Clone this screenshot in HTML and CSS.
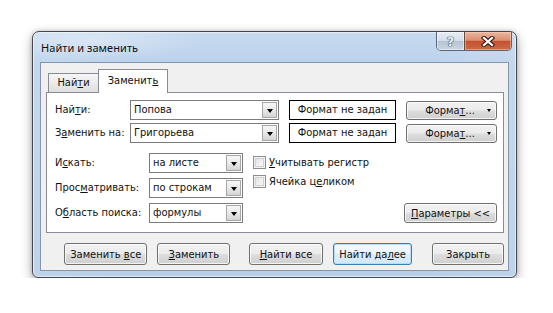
FILE: index.html
```html
<!DOCTYPE html>
<html lang="ru">
<head>
<meta charset="utf-8">
<title>Найти и заменить</title>
<link rel="stylesheet" href="styles.css">
</head>
<body>
<div class="stage">
  <div class="window">
    <div class="titlebar">
      <span class="title">Найти и заменить</span>
      <div class="caption">
        <span class="cbtn help">?</span>
        <span class="cbtn close">
          <svg width="14" height="11" viewBox="0 0 14 11">
            <path d="M3 2 L11 9 M11 2 L3 9" stroke="#3a2218" stroke-width="4.4" stroke-linecap="square" fill="none"/>
            <path d="M3 2 L11 9 M11 2 L3 9" stroke="#ffffff" stroke-width="2.2" stroke-linecap="square" fill="none"/>
          </svg>
        </span>
      </div>
    </div>
    <div class="client">
      <div class="tabs">
        <div class="tab tab-find"><span>Най<u>т</u>и</span></div>
        <div class="tab tab-replace active"><span>Заменит<u>ь</u></span></div>
      </div>
      <div class="panel">
        <div class="top-grid">
          <span class="lbl">Най<u>т</u>и:</span>
          <div class="combo"><span class="val">Попова</span><span class="dd"><i class="tri"></i></span></div>
          <div class="fmt">Формат не задан</div>
          <div class="btn fbtn"><span class="ftxt">Форма<u>т</u>...</span><i class="arr"></i></div>

          <span class="lbl">З<u>а</u>менить на:</span>
          <div class="combo"><span class="val">Григорьева</span><span class="dd"><i class="tri"></i></span></div>
          <div class="fmt">Формат не задан</div>
          <div class="btn fbtn"><span class="ftxt">Форма<u>т</u>...</span><i class="arr"></i></div>
        </div>
        <div class="lower">
          <div class="opt-grid">
            <span class="lbl">И<u>с</u>кать:</span>
            <div class="combo"><span class="val">на листе</span><span class="dd"><i class="tri"></i></span></div>
            <span class="lbl">Прос<u>м</u>атривать:</span>
            <div class="combo"><span class="val">по строкам</span><span class="dd"><i class="tri"></i></span></div>
            <span class="lbl">О<u>б</u>ласть поиска:</span>
            <div class="combo"><span class="val">формулы</span><span class="dd"><i class="tri"></i></span></div>
          </div>
          <div class="right-col">
            <div class="chk"><span class="box"></span><span><u>У</u>читывать регистр</span></div>
            <div class="chk"><span class="box"></span><span>Ячейка ц<u>е</u>ликом</span></div>
            <div class="btn params"><span><u>П</u>араметры &lt;&lt;</span></div>
          </div>
        </div>
      </div>
      <div class="actions">
        <div class="btn a1"><span>Заменить <u>в</u>се</span></div>
        <div class="btn a2"><span><u>З</u>аменить</span></div>
        <div class="btn a3"><span><u>Н</u>айти все</span></div>
        <div class="btn a4 default"><span>Найти да<u>л</u>ее</span></div>
        <div class="btn a5"><span>Закрыть</span></div>
      </div>
    </div>
  </div>
</div>
</body>
</html>
```
FILE: styles.css
```css
html, body {
  margin: 0;
  background: #ffffff;
}
body {
  font-family: "DejaVu Sans Condensed", "Liberation Sans", sans-serif;
  font-size: 11px;
  color: #111;
}
u { text-decoration: underline; text-underline-offset: 1px; }

.stage {
  padding: 31px 0 0 32px;
}

.window {
  box-sizing: border-box;
  width: 485px;
  height: 247px;
  border: 1px solid #43474e;
  border-radius: 7px 7px 6px 6px;
  background:
    radial-gradient(ellipse 160px 30px at 60px 8px, rgba(255,255,255,0.35), rgba(255,255,255,0) 70%),
    linear-gradient(90deg, rgba(255,255,255,0.12) 0%, rgba(255,255,255,0) 20%, rgba(255,255,255,0) 80%, rgba(255,255,255,0.12) 100%),
    linear-gradient(180deg, #c6d9ef 0px, #bcd2eb 30px, #b6cee8 100%);
  box-shadow: 0 4px 12px rgba(0,0,0,0.32), 0 0 4px rgba(0,0,0,0.18), inset 0 0 0 1px rgba(255,255,255,0.55);
  display: flex;
  flex-direction: column;
}

.titlebar {
  height: 30px;
  display: flex;
  justify-content: space-between;
  align-items: flex-start;
  padding-left: 8px;
}
.title {
  font-family: "Noto Sans", "Open Sans", sans-serif;
  font-size: 11px;
  letter-spacing: 0.05px;
  line-height: 16px;
  margin-top: 8px;
  color: #101010;
}
.caption {
  display: flex;
  margin-right: 4px;
  height: 18px;
  border: 1px solid #59667a;
  border-top: none;
  border-radius: 0 0 5px 5px;
  overflow: hidden;
}
.cbtn {
  display: flex;
  align-items: center;
  justify-content: center;
  height: 18px;
}
.help {
  width: 27px;
  background: linear-gradient(180deg, #e6eef7 0%, #d3dfec 48%, #b4c2d2 50%, #c8d6e6 100%);
  font-family: "DejaVu Sans", sans-serif;
  font-weight: bold;
  font-size: 13px;
  color: #eef1f4;
  text-shadow: 0 0 1px #3c4654, 0 0 1px #3c4654, 0 0 1px #3c4654;
  box-shadow: inset 0 0 0 1px rgba(255,255,255,0.5);
}
.close {
  width: 46px;
  border-left: 1px solid #6b4a3c;
  background: linear-gradient(180deg, #eab7a0 0%, #dc8e70 46%, #c4522f 52%, #cc6a45 100%);
  box-shadow: inset 0 0 0 1px rgba(255,220,200,0.45);
}

.client {
  flex: 1;
  margin: 0 7px 6px 7px;
  border: 1px solid #8596ab;
  background: #f0f0f0;
  padding: 6px 4px 0 5px;
  display: flex;
  flex-direction: column;
}

.tabs {
  display: flex;
  align-items: flex-end;
  padding-left: 2px;
  height: 23px;
}
.tab {
  box-sizing: border-box;
  border: 1px solid #898c95;
  border-bottom: none;
  text-align: center;
}
.tab-find {
  width: 51px;
  height: 19px;
  line-height: 18px;
  background: linear-gradient(180deg, #f6f6f6 0%, #ebebeb 50%, #dedede 100%);
}
.tab.active {
  position: relative;
  z-index: 1;
  width: 70px;
  height: 24px;
  margin-left: -1px;
  margin-bottom: -1px;
  line-height: 21px;
  background: #ffffff;
}

.panel {
  border: 1px solid #898c95;
  background: #ffffff;
  padding: 7px 6px 9px 8px;
}

.top-grid {
  display: grid;
  grid-template-columns: 65px 149px 107px 91px;
  grid-auto-rows: 20px;
  column-gap: 10px;
  row-gap: 3px;
  align-items: center;
}
.lbl {
  white-space: nowrap;
  line-height: 20px;
}

.combo {
  box-sizing: border-box;
  height: 20px;
  display: flex;
  align-items: stretch;
  border: 1px solid #7c7c7c;
  background: #fff;
}
.combo .val {
  flex: 1;
  padding-left: 3px;
  line-height: 18px;
  white-space: nowrap;
  overflow: hidden;
}
.dd {
  box-sizing: border-box;
  width: 15px;
  margin: 1px;
  border: 1px solid #a7a7a7;
  background: linear-gradient(180deg, #f7f7f7 0%, #e9e9e9 50%, #d4d4d4 100%);
  display: flex;
  align-items: center;
  justify-content: center;
}
.tri {
  width: 0;
  height: 0;
  border-left: 3.5px solid transparent;
  border-right: 3.5px solid transparent;
  border-top: 4px solid #000;
  margin-top: 1px;
}

.fmt {
  box-sizing: border-box;
  height: 20px;
  border: 1px solid #000;
  background: #fff;
  text-align: center;
  line-height: 18px;
  white-space: nowrap;
}

.btn {
  box-sizing: border-box;
  border: 1px solid #707070;
  border-radius: 3px;
  background: linear-gradient(180deg, #f2f2f2 0%, #ebebeb 48%, #dddddd 52%, #cfcfcf 100%);
  box-shadow: inset 0 0 0 1px rgba(255,255,255,0.75);
  display: flex;
  align-items: center;
  justify-content: center;
  white-space: nowrap;
}
.fbtn {
  height: 19px;
  padding-left: 6px;
}
.fbtn .ftxt {
  flex: 1;
  text-align: center;
}
.arr {
  width: 0;
  height: 0;
  border-left: 2.5px solid transparent;
  border-right: 2.5px solid transparent;
  border-top: 3px solid #000;
  margin-right: 5px;
  margin-top: 1px;
}

.lower {
  display: flex;
  margin-top: 10px;
}
.opt-grid {
  display: grid;
  grid-template-columns: 84px 94px;
  grid-auto-rows: 20px;
  column-gap: 10px;
  row-gap: 5px;
  align-items: center;
}
.right-col {
  margin-left: 10px;
  width: 244px;
  display: flex;
  flex-direction: column;
}
.chk {
  height: 19px;
  display: flex;
  align-items: center;
  gap: 3px;
}
.box {
  box-sizing: border-box;
  width: 13px;
  height: 13px;
  border: 1px solid #8e8f8f;
  background: linear-gradient(135deg, #dcdcdc 0%, #f2f2f2 60%, #fafafa 100%);
  box-shadow: inset 0 0 0 1px #f4f4f4, inset 0 0 0 2px #d0d0d0;
}
.params {
  margin-top: auto;
  align-self: flex-end;
  width: 93px;
  height: 20px;
}

.actions {
  display: flex;
  margin-top: 10px;
  padding-left: 18px;
}
.actions .btn { height: 22px; }
.a1 { width: 85px; }
.a2 { width: 74px; margin-left: 10px; }
.a3 { width: 75px; margin-left: 19px; }
.a4 { width: 81px; margin-left: 10px; }
.a5 { width: 73px; margin-left: 20px; }
.btn.default {
  border-color: #3c7fb1;
  background: linear-gradient(180deg, #f4fafe 0%, #eaf5fc 48%, #dcedf9 52%, #d3e8f7 100%);
  box-shadow: inset 0 0 0 1px #b6ddf5;
}
```
